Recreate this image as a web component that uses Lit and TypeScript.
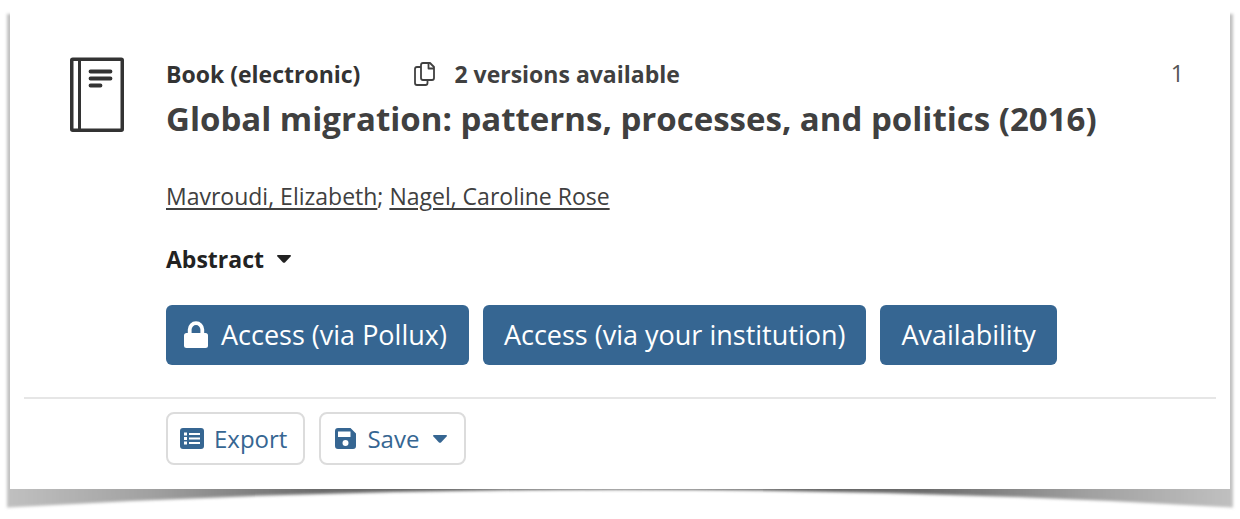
import { LitElement, html, css, svg } from "lit";
import { customElement } from "lit/decorators.js";

const caret = svg`<path d="M1 0H13Q14.6 0.4 13.6 1.6L8 7.4Q7 8.3 6 7.4L0.4 1.6Q-0.6 0.4 1 0Z" fill="currentColor" />`;

@customElement("app-root")
export class AppRoot extends LitElement {
  static styles = css`
    :host {
      display: block;
      background: #fff;
      color: #404040;
      font-family: "Open Sans", "Noto Sans", sans-serif;
      font-size: 23px;
      line-height: 34px;
    }
    * { box-sizing: border-box; }
    svg { display: block; flex: none; }
    .page { position: relative; padding: 10px 10px 30px; }
    .shadow { position: absolute; left: 0; top: 0; width: 100%; height: 100%; }
    .card { position: relative; background: #fff; padding: 47px 14px 24px; }
    .record {
      display: grid;
      grid-template-columns: 54px 1fr auto;
      column-gap: 42px;
      padding: 0 32px 32px 46px;
    }
    .kind { display: flex; align-items: center; font-weight: 700; color: #333; }
    .versions { display: flex; align-items: center; gap: 18px; margin-left: 54px; color: #404040; }
    h2 { margin: 4px 0 0; font-size: 33px; line-height: 48px; font-weight: 700; }
    .details { min-width: 0; }
    .authors { margin: 36px 0 0; }
    a { color: inherit; text-decoration: underline; text-decoration-thickness: 2px; text-underline-offset: 3px; }
    button { font: inherit; margin: 0; cursor: pointer; display: flex; align-items: center; white-space: nowrap; }
    .abstract { border: 0; padding: 0; margin-top: 29px; background: none; color: #222; font-weight: 700; gap: 13px; }
    .access { display: flex; gap: 14px; margin-top: 29px; }
    .primary { height: 60px; padding: 0 21px; border: 0; border-radius: 6px; background: #366692; color: #fff; font-size: 27px; }
    .locked { padding: 0 22px 0 18px; gap: 13px; }
    .rank { line-height: 32px; color: #555; }
    .tools { display: flex; gap: 14px; border-top: 2px solid #e6e6e6; padding: 13px 0 0 142px; font-size: 24px; }
    .tool { height: 53px; border: 2px solid #dcdcdc; border-radius: 8px; background: #fff; color: #366692; padding: 0 16px 0 12px; gap: 10px; }
    .save { padding: 0 17px 0 14px; gap: 11px; }
    .save .caret { margin-left: 3px; }
  `;

  render() {
    return html`
      <main class="page">
        <svg class="shadow" viewBox="0 0 1240 519" preserveAspectRatio="none" aria-hidden="true">
          <defs>
            <linearGradient id="shade" x1="0" x2="1" y1="0" y2="0">
              <stop offset="0" stop-color="#c0c0c0" />
              <stop offset="0.12" stop-color="#a0a0a0" />
              <stop offset="0.25" stop-color="#6c6c6c" />
              <stop offset="0.5" stop-color="#505050" />
              <stop offset="0.75" stop-color="#6c6c6c" />
              <stop offset="0.88" stop-color="#a0a0a0" />
              <stop offset="1" stop-color="#c0c0c0" />
            </linearGradient>
            <filter id="soft" x="-5%" y="-5%" width="110%" height="110%"><feGaussianBlur stdDeviation="1.6" /></filter>
          </defs>
          <path d="M7 14H1233V507.5Q926 489.5 620 489.5Q314 489.5 7 507.5Z" fill="url(#shade)" filter="url(#soft)" />
        </svg>
        <article class="card">
          <div class="record">
            <svg width="54" height="75" viewBox="0 0 54 75" fill="none" stroke="#333" aria-hidden="true">
              <rect x="1.75" y="2.25" width="50.5" height="71" rx="1" stroke-width="3.5" />
              <path d="M9.5 2V73" stroke-width="3" />
              <path d="M20.5 14.5H40.5M20.5 21.5H40.5M20.5 28.5H30.5" stroke-width="3.8" stroke-linecap="round" />
            </svg>
            <div class="details">
              <div class="kind">
                <span>Book (electronic)</span>
                <span class="versions">
                  <svg width="22" height="24" viewBox="0 0 22 24" fill="none" stroke="#404040" stroke-width="1.8" stroke-linejoin="round" aria-hidden="true">
                    <path d="M9 1H16L20 5V16Q20 18 18 18H9Q7 18 7 16V3Q7 1 9 1ZM14.5 1V6.5H20M7 5H3Q1 5 1 7V21Q1 23 3 23H11.5Q13.5 23 13.5 21V18" />
                  </svg>
                  <span>2 versions available</span>
                </span>
              </div>
              <h2>Global migration: patterns, processes, and politics (2016)</h2>
              <p class="authors"><a href="#mavroudi">Mavroudi, Elizabeth</a>; <a href="#nagel">Nagel, Caroline Rose</a></p>
              <button class="abstract" type="button">Abstract
                <svg width="14" height="8" viewBox="0 0 14 8" aria-hidden="true">${caret}</svg>
              </button>
              <div class="access">
                <button class="primary locked" type="button">
                  <svg width="24" height="28" viewBox="0 0 24 28" aria-hidden="true">
                    <path d="M5.7 13V8.5A6.3 6.3 0 0 1 18.3 8.5V13" fill="none" stroke="#fff" stroke-width="3.8" />
                    <rect y="12" width="24" height="15" rx="2.5" fill="#fff" />
                  </svg>
                  Access (via Pollux)
                </button>
                <button class="primary" type="button">Access (via your institution)</button>
                <button class="primary" type="button">Availability</button>
              </div>
            </div>
            <div class="rank">1</div>
          </div>
          <div class="tools">
            <button class="tool" type="button">
              <svg width="24" height="22" viewBox="0 0 24 22" aria-hidden="true">
                <rect width="24" height="21" rx="3" fill="#366692" />
                <path d="M9 6H20M9 10.5H20M9 15H20" stroke="#fff" stroke-width="2" />
                <path d="M4 6H7M4 10.5H7M4 15H7" stroke="#fff" stroke-width="2.8" />
              </svg>
              Export
            </button>
            <button class="tool save" type="button">
              <svg width="21" height="22" viewBox="0 0 21 22" aria-hidden="true">
                <path d="M3 0H15.5L21 5.5V18Q21 21 18 21H3Q0 21 0 18V3Q0 0 3 0ZM3 3.5V9H15.5V3.5ZM10.5 12A3 3 0 1 0 10.5 18A3 3 0 1 0 10.5 12Z" fill="#366692" fill-rule="evenodd" />
              </svg>
              Save
              <svg class="caret" width="14" height="8" viewBox="0 0 14 8" aria-hidden="true">${caret}</svg>
            </button>
          </div>
        </article>
      </main>
    `;
  }
}
